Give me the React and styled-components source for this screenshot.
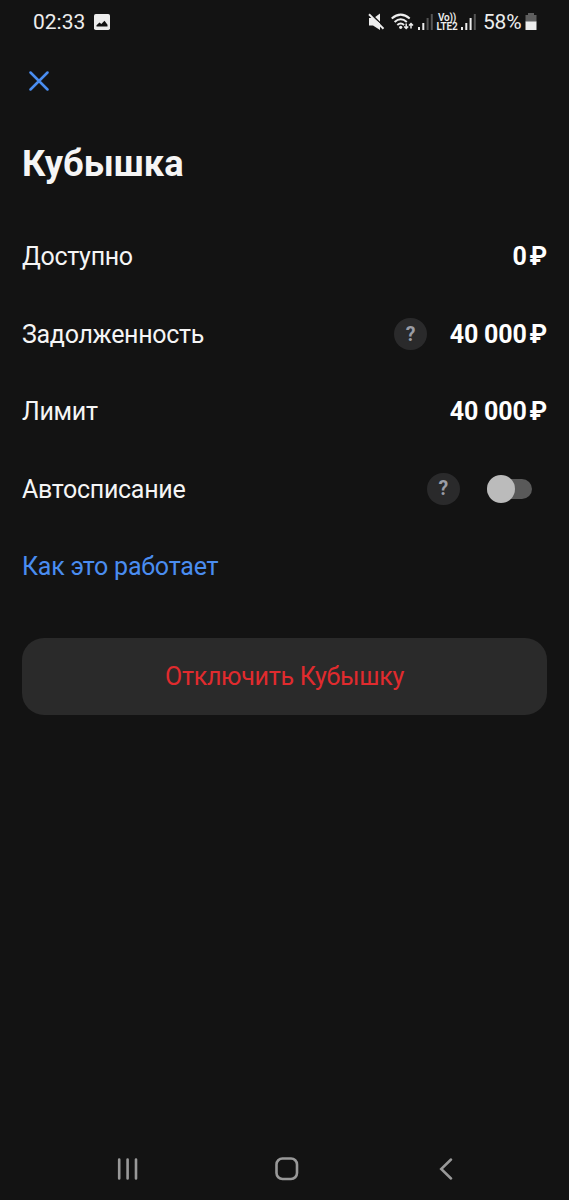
import React, { useState } from "react";
import styled, { createGlobalStyle } from "styled-components";

const rows = [
  { label: "Доступно", amount: "0" },
  { label: "Задолженность", amount: "40 000", hint: true },
  { label: "Лимит", amount: "40 000" },
];

const SignalIcon = ({ level }) => (
  <svg width="16" height="18" viewBox="0 0 16 18">
    <rect x="0" y="14" width="2" height="3" fill="#ededed" />
    <rect x="4.3" y="10" width="2" height="7" fill="#ededed" />
    <rect x="8.6" y="5" width="2" height="12" fill={level > 2 ? "#ededed" : "#555"} />
    <rect x="12.8" y="1" width="2" height="16" fill="#555" />
  </svg>
);

const StatusBar = () => (
  <StatusWrapper>
    <Clock>02:33</Clock>
    <svg width="16" height="16" viewBox="0 0 16 16">
      <rect width="16" height="16" rx="1.8" fill="#ededed" />
      <path d="M2.5 12.5v-1.3l3-2.7 1.8 1.5 3.2-3.3 3 4v1.8z" fill="#131313" />
    </svg>
    <StatusIcons>
      <svg width="17" height="18" viewBox="0 0 17 18">
        <path d="M1 5h3.5L12 10V17L5 12.5H1z" fill="#ededed" />
        <path d="M6.5 4.500L12 .5V9.5z" fill="#ededed" />
        <path d="M2.5 .2L17 14.7" stroke="#131313" strokeWidth="1.2" />
        <path d="M1 1.2L15.5 15.7" stroke="#ededed" strokeWidth="2" />
      </svg>
      <WifiIcon width="24" height="18" viewBox="0 0 24 18">
        <g fill="none" stroke="#ededed" strokeWidth="2">
          <path d="M.7 5.5Q9.7 -2.3 18.7 5.5" />
          <path d="M3.6 9Q9.7 3.5 15.8 9" />
          <path d="M6.3 12Q9.7 9 13.1 12" />
        </g>
        <circle cx="9.7" cy="14.3" r="1.6" fill="#ededed" />
        <g fill="none" stroke="#ededed" strokeWidth="1.5">
          <path d="M15.2 10.5v5M13.2 13.5l2 2 2-2" />
          <path d="M20 15.5v-5M18 12.5l2-2 2 2" />
        </g>
      </WifiIcon>
      <SignalIcon level={2} />
      <Volte>
        <span>Vo))</span>
        <span>LTE2</span>
      </Volte>
      <SignalIcon level={3} />
      <Battery>58%</Battery>
      <svg width="12" height="18" viewBox="0 0 12 18">
        <path d="M3 0h6v2h2.5v7H.5V2H3z" fill="#5e5e5e" />
        <path d="M.5 8.500h11V17H.5z" fill="#ededed" />
      </svg>
    </StatusIcons>
  </StatusWrapper>
);

const App = () => {
  const [autoDebit, setAutoDebit] = useState(false);

  return (
    <Screen>
      <GlobalStyle />
      <StatusBar />
      <Header>
        <CloseButton aria-label="Закрыть">
          <svg width="20" height="20" viewBox="0 0 20 20">
            <path
              d="M1.5 1.5l17 17M18.5 1.5l-17 17"
              stroke="#4a8df0"
              strokeWidth="2.5"
              strokeLinecap="round"
            />
          </svg>
        </CloseButton>
      </Header>
      <Content>
        <Title>Кубышка</Title>
        {rows.map(({ label, amount, hint }) => (
          <Row key={label}>
            <Label>{label}</Label>
            {hint && <Hint>?</Hint>}
            <Amount>
              {amount}
              <Currency>₽</Currency>
            </Amount>
          </Row>
        ))}
        <Row>
          <Label>Автосписание</Label>
          <Hint>?</Hint>
          <Toggle
            role="switch"
            aria-checked={autoDebit}
            aria-label="Автосписание"
            $on={autoDebit}
            onClick={() => setAutoDebit(!autoDebit)}
          >
            <Knob />
          </Toggle>
        </Row>
        <Row>
          <Link href="#">Как это работает</Link>
        </Row>
        <DisableButton>Отключить Кубышку</DisableButton>
      </Content>
      <NavBar>
        <svg width="22" height="22" viewBox="0 0 22 22">
          <path
            d="M2.2 1.5v19M10.6 1.5v19M19 1.5v19"
            stroke="#999"
            strokeWidth="2.6"
            strokeLinecap="round"
          />
        </svg>
        <svg width="24" height="24" viewBox="0 0 24 24">
          <rect x="1.5" y="1.5" width="20.5" height="20.5" rx="6" fill="none" stroke="#999" strokeWidth="2.6" />
        </svg>
        <svg width="14" height="22" viewBox="0 0 14 22">
          <path
            d="M12 1.5L2.2 11 12 20.5"
            fill="none"
            stroke="#999"
            strokeWidth="2.5"
            strokeLinecap="round"
          />
        </svg>
      </NavBar>
    </Screen>
  );
};

const GlobalStyle = createGlobalStyle`
  * {
    box-sizing: border-box;
  }
  body {
    margin: 0;
    background: #131313;
  }
  button {
    padding: 0;
    border: none;
    background: none;
    font-family: inherit;
    cursor: pointer;
  }
  svg {
    display: block;
    flex-shrink: 0;
  }
`;

const Screen = styled.div`
  display: flex;
  flex-direction: column;
  height: 1200px;
  background: #131313;
  color: #f5f5f5;
  font-family: Roboto, sans-serif;
`;

const StatusWrapper = styled.div`
  display: flex;
  align-items: center;
  height: 43px;
  padding: 0 32px 0 33px;
  color: #ededed;
`;

const Clock = styled.span`
  width: 61px;
  padding-top: 2px;
  font-size: 21px;
  line-height: 41px;
`;

const StatusIcons = styled.div`
  display: flex;
  align-items: center;
  margin-left: auto;
`;

const WifiIcon = styled.svg`
  margin: 0 3px 0 6px;
`;

const Volte = styled.div`
  display: flex;
  flex-direction: column;
  align-items: center;
  width: 22px;
  margin: 0 3px 0 2px;
  font-size: 10px;
  font-weight: 600;
  line-height: 9px;
  letter-spacing: -0.2px;
`;

const Battery = styled.span`
  width: 42px;
  margin-left: 6px;
  padding-top: 2px;
  font-size: 21px;
  line-height: 41px;
  letter-spacing: -0.2px;
  white-space: nowrap;
`;

const Header = styled.div`
  display: flex;
  align-items: center;
  height: 76px;
  padding-left: 29px;
`;

const CloseButton = styled.button`
  width: 20px;
  height: 20px;
`;

const Content = styled.main`
  display: flex;
  flex-direction: column;
  padding: 0 22px;
`;

const Title = styled.h1`
  margin: 25px 0 34px;
  font-size: 36.3px;
  font-weight: 700;
  line-height: 40px;
`;

const Row = styled.div`
  display: flex;
  align-items: center;
  height: 77.4px;
  font-size: 25px;
  line-height: 30px;
`;

const Label = styled.span`
  flex: 1;
  padding-top: 1.6px;
  letter-spacing: -0.3px;
`;

const Hint = styled.button`
  display: flex;
  align-items: center;
  justify-content: center;
  width: 32.5px;
  height: 32.5px;
  margin-right: 23px;
  border-radius: 50%;
  background: #2a2a2b;
  color: #9a9da6;
  font-size: 19.5px;
  font-weight: 700;
`;

const Amount = styled.span`
  padding-top: 1.6px;
  color: #fff;
  font-weight: 700;
  letter-spacing: -0.2px;
`;

const Currency = styled.span`
  margin-left: 3px;
`;

const Toggle = styled.button`
  display: flex;
  align-items: center;
  justify-content: ${(props) => (props.$on ? "flex-end" : "flex-start")};
  width: 45px;
  height: 20px;
  margin: 0 15px 0 4.5px;
  border-radius: 10px;
  background: #595959;
`;

const Knob = styled.span`
  flex-shrink: 0;
  width: 28px;
  height: 28px;
  border-radius: 50%;
  background: #bbb;
`;

const Link = styled.a`
  padding-top: 1.6px;
  color: #4a8df0;
  letter-spacing: -0.22px;
  text-decoration: none;
`;

const DisableButton = styled.button`
  height: 77px;
  margin-top: 33px;
  border-radius: 22px;
  background: #2a2a2a;
  color: #e02b2e;
  font-size: 25px;
  letter-spacing: -0.27px;
`;

const NavBar = styled.nav`
  display: grid;
  grid-template-columns: 158px 164px 14px;
  align-items: center;
  height: 62px;
  margin-top: auto;
  padding-left: 116.5px;
`;

export default App;
